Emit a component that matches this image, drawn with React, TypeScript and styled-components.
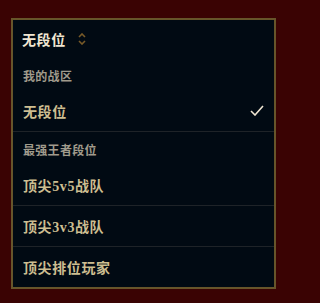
import React from 'react';
import styled, { createGlobalStyle } from 'styled-components';

const GlobalStyle = createGlobalStyle`
  html, body {
    margin: 0;
    padding: 0;
    background: #3a0303;
  }
  body {
    font-family: "Liberation Serif", "Noto Sans CJK SC", serif;
  }
`;

const Page = styled.div`
  padding: 18px 0 0 11px;
  height: 303px;
  box-sizing: border-box;
`;

const Panel = styled.div`
  width: 265px;
  height: 271px;
  box-sizing: border-box;
  border: 2px solid #67552a;
  background: #010a13;
  display: flex;
  flex-direction: column;
`;

const Header = styled.div`
  display: flex;
  align-items: center;
  gap: 12px;
  height: 39px;
  padding: 0 9px;
  color: #f0e6d2;
  font-size: 14px;
  font-weight: 700;
  letter-spacing: 0.6px;
`;

const Group = styled.div<{ $divided?: boolean }>`
  display: flex;
  flex-direction: column;
  border-top: ${(p) => (p.$divided ? '1px solid #1e2328' : 'none')};
`;

const Label = styled.div`
  padding: 12px 10px 6px;
  line-height: 14px;
  font-size: 12px;
  font-weight: 700;
  color: #a09b8c;
  letter-spacing: 0.3px;
`;

const Item = styled.div<{ $divided?: boolean }>`
  display: flex;
  align-items: center;
  justify-content: space-between;
  height: 41px;
  box-sizing: border-box;
  padding: 0 10px;
  font-size: 14px;
  font-weight: 700;
  letter-spacing: 0.6px;
  color: #cdbe91;
  border-top: ${(p) => (p.$divided ? '1px solid #1e2328' : 'none')};
`;

const UpDown = () => (
  <svg width="8" height="12" viewBox="0 0 8 12" fill="none" stroke="#785a28" strokeWidth="1.6">
    <path d="M1 4 L4 1 L7 4" />
    <path d="M1 8 L4 11 L7 8" />
  </svg>
);

const Check = () => (
  <svg width="14" height="11" viewBox="0 0 14 11" fill="none" stroke="#f0e6d2" strokeWidth="1.6">
    <path d="M1 6 L5 10 L13 1" />
  </svg>
);

const App: React.FC = () => {
  return (
    <Page>
      <GlobalStyle />
      <Panel>
        <Header>
          <span>无段位</span>
          <UpDown />
        </Header>
        <Group>
          <Label>我的战区</Label>
          <Item>
            <span>无段位</span>
            <Check />
          </Item>
        </Group>
        <Group $divided>
          <Label>最强王者段位</Label>
          <Item>顶尖5v5战队</Item>
          <Item $divided>顶尖3v3战队</Item>
          <Item $divided>顶尖排位玩家</Item>
        </Group>
      </Panel>
    </Page>
  );
};

export default App;
